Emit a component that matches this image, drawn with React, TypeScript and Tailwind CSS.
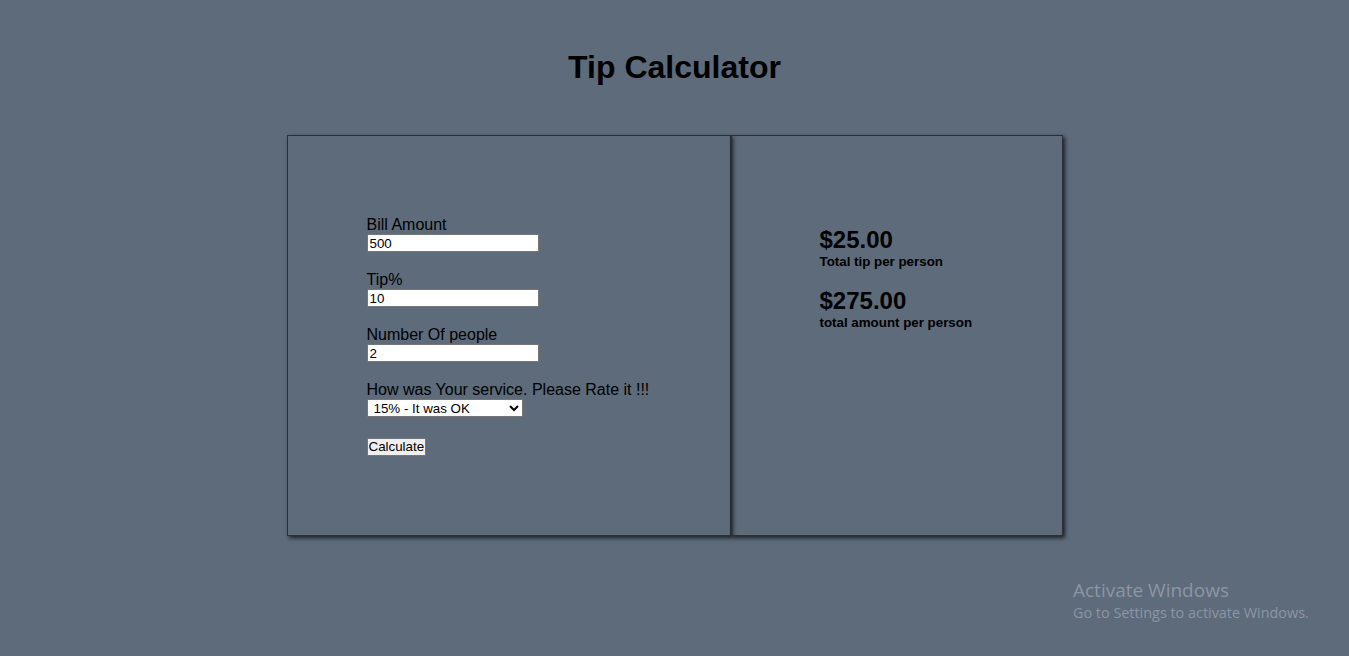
import React, { useState } from 'react';

const App = () => {
  const [bill, setBill] = useState('500');
  const [tip, setTip] = useState('10');
  const [people, setPeople] = useState('2');
  const [service, setService] = useState('15');

  const inputCls =
    'block w-[172px] h-[18px] bg-white border border-[#767676] px-[2px] text-[13.33px] leading-[14px] text-black outline-none';

  return (
    <div
      className="relative min-h-screen bg-[#5d6b7b] text-black"
      style={{ fontFamily: '"Liberation Sans", Arial, sans-serif' }}
    >
      <h1 className="pt-[49px] text-center text-[32px] font-bold leading-[37px]">Tip Calculator</h1>

      <div className="mx-auto mt-[49px] flex w-[776px]">
        {/* Inputs */}
        <div className="h-[401px] w-[444px] border border-[#2a2f36] pl-[79px] pt-[79px] shadow-[2px_2px_4px_rgba(0,0,0,0.7)]">
          <div className="flex flex-col gap-[18px]">
            <div>
              <label className="block text-[16px] leading-[19px]">Bill Amount</label>
              <input className={inputCls} value={bill} onChange={(e) => setBill(e.target.value)} />
            </div>
            <div>
              <label className="block text-[16px] leading-[19px]">Tip%</label>
              <input className={inputCls} value={tip} onChange={(e) => setTip(e.target.value)} />
            </div>
            <div>
              <label className="block text-[16px] leading-[19px]">Number Of people</label>
              <input className={inputCls} value={people} onChange={(e) => setPeople(e.target.value)} />
            </div>
            <div>
              <label className="block text-[16px] leading-[19px]">How was Your service. Please Rate it !!!</label>
              <select
                className="block h-[18px] w-[156px] border border-[#767676] bg-white pl-[2px] text-[13.33px] leading-[14px] text-black"
                value={service}
                onChange={(e) => setService(e.target.value)}
              >
                <option value="30">30% - Outstanding</option>
                <option value="20">20% - Good</option>
                <option value="15">15% - It was OK</option>
                <option value="10">10% - Bad</option>
                <option value="5">5% - Terrible</option>
              </select>
            </div>
            <div className="-mt-[1px]">
              <button className="h-[18px] border border-[#767676] bg-[#efefef] px-[1px] text-[13.33px] leading-[14px] text-black">
                Calculate
              </button>
            </div>
          </div>
        </div>

        {/* Results */}
        <div className="h-[401px] w-[332px] border border-[#2a2f36] pl-[88px] pt-[90px] shadow-[2px_2px_4px_rgba(0,0,0,0.7)]">
          <div className="text-[24px] font-bold leading-[28px]">$25.00</div>
          <div className="text-[13.33px] font-bold leading-[15px]">Total tip per person</div>
          <div className="mt-[18px] text-[24px] font-bold leading-[28px]">$275.00</div>
          <div className="text-[13.33px] font-bold leading-[15px]">total amount per person</div>
        </div>
      </div>

      <div
        className="absolute left-[1073px] top-[577px] text-[#8c96a3]"
        style={{ fontFamily: '"Open Sans", "Noto Sans", sans-serif' }}
      >
        <div className="text-[19px] leading-[26px]">Activate Windows</div>
        <div className="text-[14.4px] leading-[19px]">Go to Settings to activate Windows.</div>
      </div>
    </div>
  );
};

export default App;
